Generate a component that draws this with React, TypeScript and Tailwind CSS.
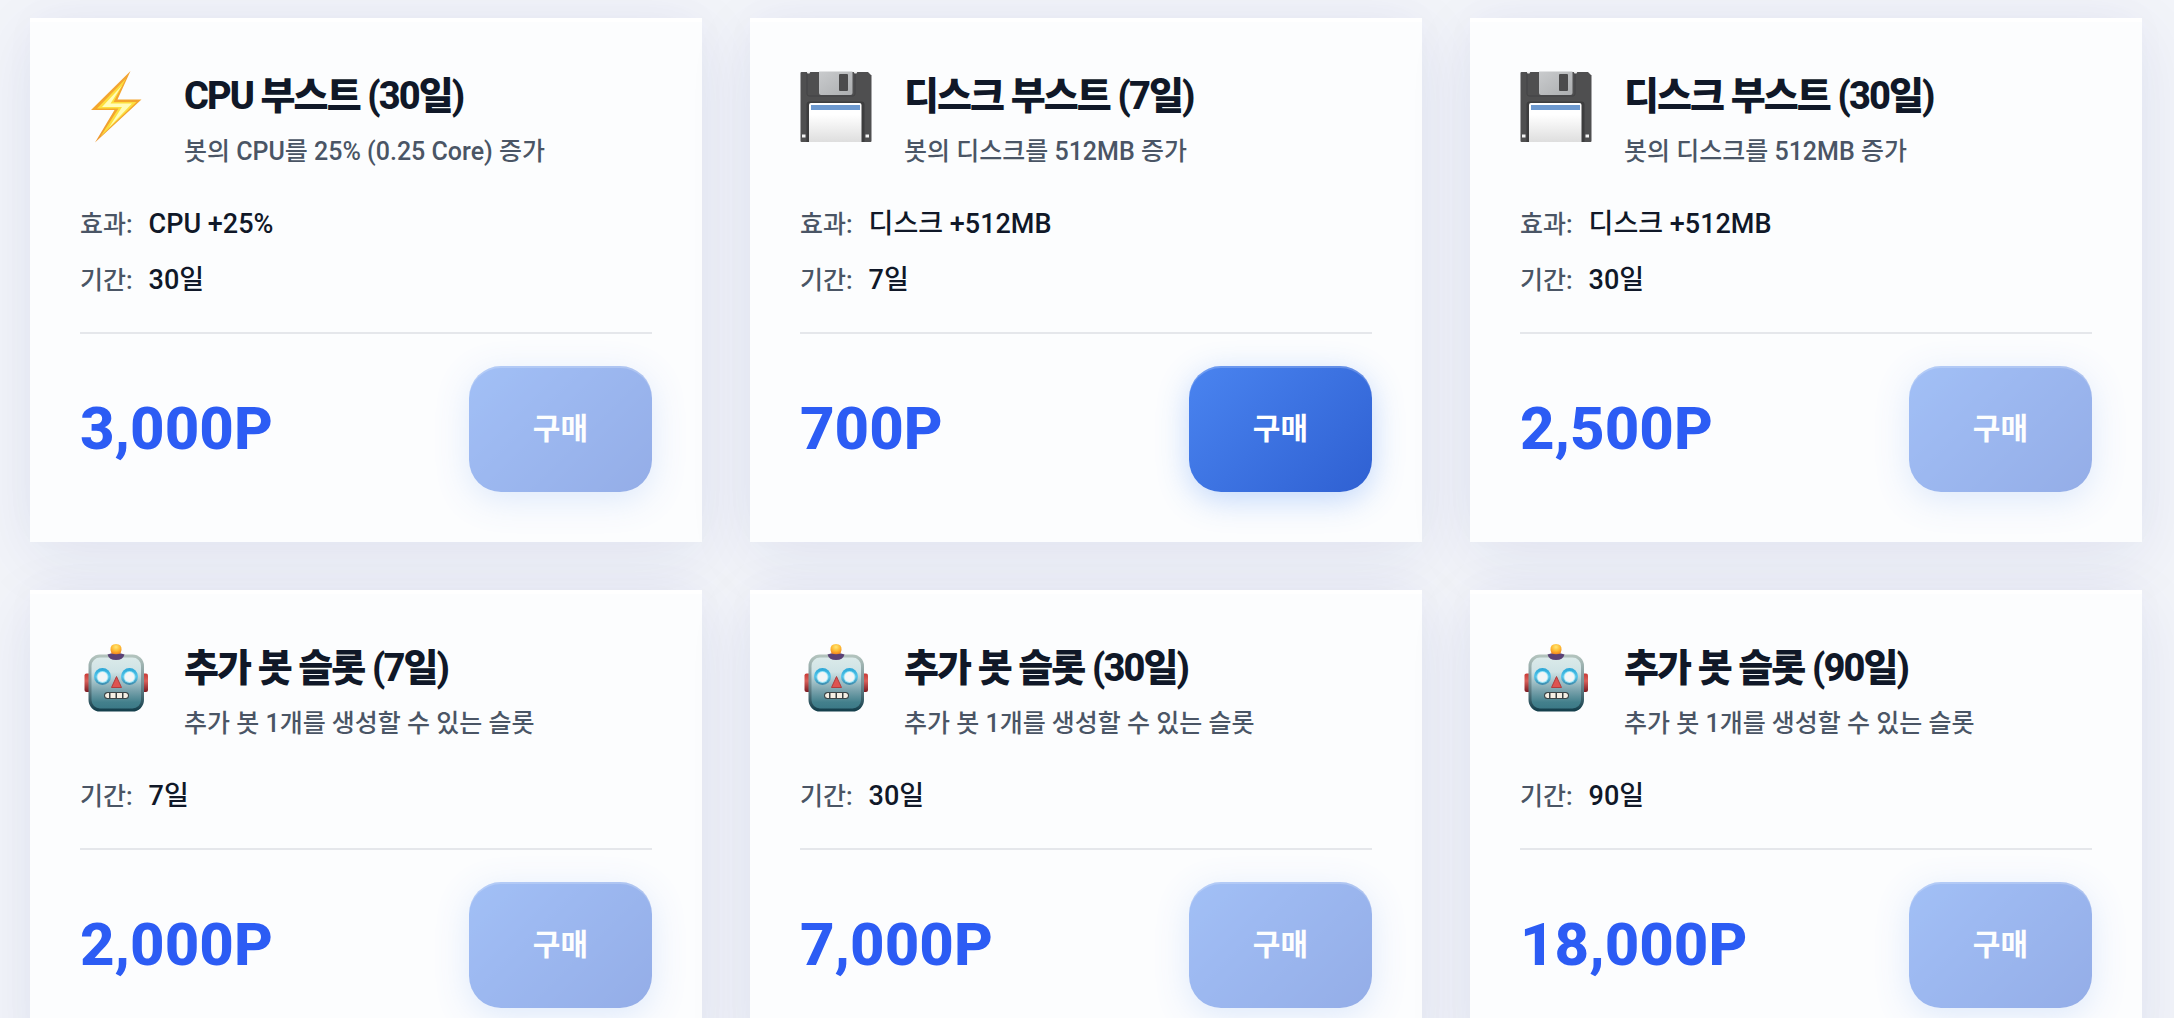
import { useId } from 'react';
import { clsx } from 'clsx';

type IconName = 'bolt' | 'disk' | 'robot';

interface ShopItem {
  id: string;
  icon: IconName;
  title: string;
  description: string;
  effect?: string;
  period: string;
  price: number;
  affordable: boolean;
}

const ITEMS: ShopItem[] = [
  { id: 'cpu-30', icon: 'bolt', title: 'CPU 부스트 (30일)', description: '봇의 CPU를 25% (0.25 Core) 증가', effect: 'CPU +25%', period: '30일', price: 3000, affordable: false },
  { id: 'disk-7', icon: 'disk', title: '디스크 부스트 (7일)', description: '봇의 디스크를 512MB 증가', effect: '디스크 +512MB', period: '7일', price: 700, affordable: true },
  { id: 'disk-30', icon: 'disk', title: '디스크 부스트 (30일)', description: '봇의 디스크를 512MB 증가', effect: '디스크 +512MB', period: '30일', price: 2500, affordable: false },
  { id: 'slot-7', icon: 'robot', title: '추가 봇 슬롯 (7일)', description: '추가 봇 1개를 생성할 수 있는 슬롯', period: '7일', price: 2000, affordable: false },
  { id: 'slot-30', icon: 'robot', title: '추가 봇 슬롯 (30일)', description: '추가 봇 1개를 생성할 수 있는 슬롯', period: '30일', price: 7000, affordable: false },
  { id: 'slot-90', icon: 'robot', title: '추가 봇 슬롯 (90일)', description: '추가 봇 1개를 생성할 수 있는 슬롯', period: '90일', price: 18000, affordable: false },
];

function BoltIcon() {
  const id = useId();
  return (
    <svg viewBox="0 0 72 72" className="size-18" aria-hidden="true">
      <defs>
        <linearGradient id={id} x1="0" y1="0" x2="0" y2="1">
          <stop offset="0" stopColor="#f3a536" />
          <stop offset="0.5" stopColor="#f4a62c" />
          <stop offset="1" stopColor="#ee9a35" />
        </linearGradient>
      </defs>
      <path d="M50.5 0 L11 39 H34.5 L15 71.5 L61.5 28.500 H37.5 Z" fill={`url(#${id})`} />
      <path d="M46 7.5 L17 37.5 H38.5 L20.5 65.5 L56.5 31 H33.5 Z" fill="#fddf3d" />
      <path d="M42 14.5 L22 36 H42 L29 56.5 L52 32.5 H30.5 Z" fill="#fffdb8" />
    </svg>
  );
}

function DiskIcon() {
  const id = useId();
  return (
    <svg viewBox="0 0 72 72" className="size-18" aria-hidden="true">
      <defs>
        <linearGradient id={`${id}-label`} x1="0" y1="0" x2="0" y2="1">
          <stop offset="0.3" stopColor="#ffffff" />
          <stop offset="1" stopColor="#dedede" />
        </linearGradient>
        <linearGradient id={`${id}-metal`} x1="0" y1="0" x2="1" y2="1">
          <stop offset="0" stopColor="#c9cbcd" />
          <stop offset="1" stopColor="#acaeb0" />
        </linearGradient>
      </defs>
      <path d="M1.5 1 H68 L71.5 4.5 V70 Q71.5 71 70.5 71 H1.5 Q0.5 71 0.5 70 V2 Q0.5 1 1.5 1 Z" fill="#4f4f50" />
      <path d="M7 1 V23 Q7 25 9 25 H53 Q55 25 55 23 V1" fill="none" stroke="#434344" strokeWidth="1" />
      <path d="M6.5 0.5 H10.5 L9.5 2.5 H7.5 Z M53.5 0.5 H57.5 L56.5 2.5 H54.5 Z" fill="#f1f1f1" />
      <path d="M19 0.5 H52.5 V22 Q52.5 24 50.5 24 H21 Q19 24 19 22 Z" fill={`url(#${id}-metal)`} />
      <rect x="39" y="3" width="9" height="17" rx="1" fill="#4b4b4c" />
      <path d="M6.5 71 V33.5 Q6.5 30.5 9.5 30.5 H61.5 Q64.5 30.5 64.5 33.5 V71 Z" fill="#3d3d3e" />
      <path d="M9 71 V34 Q9 32 11 32 H59.5 Q61.5 32 61.5 34 V71 Z" fill={`url(#${id}-label)`} />
      <rect x="11" y="34" width="49" height="5" fill="#6d99cf" />
      <rect x="2" y="63.5" width="3.5" height="3" fill="#f4f4f4" />
      <rect x="65.5" y="63.5" width="3.5" height="3" fill="#f4f4f4" />
    </svg>
  );
}

function RobotIcon() {
  const id = useId();
  return (
    <svg viewBox="0 0 72 72" className="size-18" aria-hidden="true">
      <defs>
        <linearGradient id={`${id}-face`} x1="0" y1="0" x2="0" y2="1">
          <stop offset="0" stopColor="#dcebea" />
          <stop offset="0.3" stopColor="#cfe3e5" />
          <stop offset="0.65" stopColor="#76a0aa" />
          <stop offset="0.85" stopColor="#43808c" />
          <stop offset="1" stopColor="#397785" />
        </linearGradient>
        <linearGradient id={`${id}-edge`} x1="0" y1="0" x2="0" y2="1">
          <stop offset="0" stopColor="#b2c3bd" />
          <stop offset="0.5" stopColor="#749096" />
          <stop offset="1" stopColor="#15404d" />
        </linearGradient>
        <linearGradient id={`${id}-ear`} x1="0" y1="0" x2="0" y2="1">
          <stop offset="0" stopColor="#c93a36" />
          <stop offset="0.4" stopColor="#d9605a" />
          <stop offset="1" stopColor="#7c1a22" />
        </linearGradient>
        <radialGradient id={`${id}-bulb`} cx="0.5" cy="0.3" r="0.7">
          <stop offset="0" stopColor="#ffe873" />
          <stop offset="0.6" stopColor="#fdb52e" />
          <stop offset="1" stopColor="#ee8420" />
        </radialGradient>
        <linearGradient id={`${id}-eye`} x1="0" y1="0" x2="0" y2="1">
          <stop offset="0" stopColor="#2aa6d6" />
          <stop offset="0.5" stopColor="#52c4ea" />
          <stop offset="1" stopColor="#3c87a8" />
        </linearGradient>
      </defs>
      <rect x="4.5" y="30.5" width="8" height="18.5" rx="2" fill={`url(#${id}-ear)`} />
      <rect x="60" y="30.5" width="8" height="18.5" rx="2" fill={`url(#${id}-ear)`} />
      <rect x="9.5" y="12.5" width="53.5" height="55" rx="10" fill={`url(#${id}-face)`} />
      <rect x="10" y="13" width="52.5" height="54" rx="10" fill="none" stroke={`url(#${id}-edge)`} strokeWidth="3" />
      <path d="M27.5 11.5 Q36 8 44.5 11.5 Q43 17 36 17 Q29 17 27.5 11.5 Z" fill="#5a4275" />
      <path d="M30.5 7 Q30 1 36 1 Q42 1 41.5 7 L40.5 10.5 Q36 12 31.5 10.5 Z" fill={`url(#${id}-bulb)`} />
      <circle cx="22.5" cy="33.5" r="8.5" fill={`url(#${id}-eye)`} />
      <circle cx="49.5" cy="33.5" r="8.5" fill={`url(#${id}-eye)`} />
      <circle cx="22.5" cy="34" r="6" fill="#9be5f6" />
      <circle cx="49.5" cy="34" r="6" fill="#9be5f6" />
      <circle cx="22.5" cy="34" r="5" fill="#f2f5f6" />
      <circle cx="49.5" cy="34" r="5" fill="#f2f5f6" />
      <path d="M36.5 33.5 L41.5 44.5 H31.5 Z" fill="#de5350" stroke="#b13c3e" strokeWidth="1" strokeLinejoin="round" />
      <rect x="24" y="49" width="25" height="7" rx="3.5" fill="#3b4446" />
      <path d="M27.5 50 H29 V55 H27.5 Q25 54.5 25 52.5 Q25 50.5 27.5 50 Z M30.5 50 H35.5 V55 H30.5 Z M37 50 H42 V55 H37 Z M43.5 50 H46 Q48 50.5 48 52.5 Q48 54.5 46 55 H43.5 Z" fill="#f5efe4" />
    </svg>
  );
}

const ICONS = { bolt: BoltIcon, disk: DiskIcon, robot: RobotIcon };

function InfoRow({ label, value }: { label: string; value: string }) {
  return (
    <div className="flex h-10 items-baseline gap-4 font-medium">
      <dt className="text-[25px] leading-10 text-gray-600">{label}:</dt>
      <dd className="text-[27px] leading-10 text-gray-900">{value}</dd>
    </div>
  );
}

function ItemCard({ item }: { item: ShopItem }) {
  const Icon = ICONS[item.icon];
  return (
    <article className="bg-[#fcfdfe] p-[50px] shadow-[0_16px_64px_rgba(31,38,135,0.08),0_-8px_40px_rgba(31,38,135,0.02),inset_0_4px_0_#ffffff]">
      <header className="flex gap-8">
        <div className="flex h-[78px] shrink-0 items-center">
          <Icon />
        </div>
        <div>
          <h3 className="text-[38px] leading-14 font-extrabold tracking-tighter text-gray-900">{item.title}</h3>
          <p className="mt-2 text-[25px] leading-10 font-medium text-gray-600">{item.description}</p>
        </div>
      </header>
      <dl className="mt-8 flex flex-col gap-4">
        {item.effect && <InfoRow label="효과" value={item.effect} />}
        <InfoRow label="기간" value={item.period} />
      </dl>
      <footer className="mt-8 flex items-center justify-between border-t-2 border-gray-200 pt-8">
        <span className="text-6xl font-extrabold text-[#2c5cf4]">{item.price.toLocaleString('en-US')}P</span>
        <button
          type="button"
          disabled={!item.affordable}
          className={clsx(
            'rounded-4xl bg-linear-135 from-[#4a84f0] to-[#2f60d2] px-16 py-10 text-[30px] leading-[46px] font-bold text-white',
            'shadow-[0_8px_32px_rgba(59,130,246,0.3),inset_0_2px_0_rgba(255,255,255,0.2)] disabled:opacity-50',
          )}
        >
          구매
        </button>
      </footer>
    </article>
  );
}

export default function App() {
  return (
    <main className="h-screen overflow-hidden bg-[#f2f4f9] pt-[18px] pr-8 pl-[30px] font-['Roboto','Noto_Sans_CJK_KR',sans-serif]">
      <section className="grid grid-cols-3 items-start gap-12">
        {ITEMS.map((item) => (
          <ItemCard key={item.id} item={item} />
        ))}
      </section>
    </main>
  );
}
